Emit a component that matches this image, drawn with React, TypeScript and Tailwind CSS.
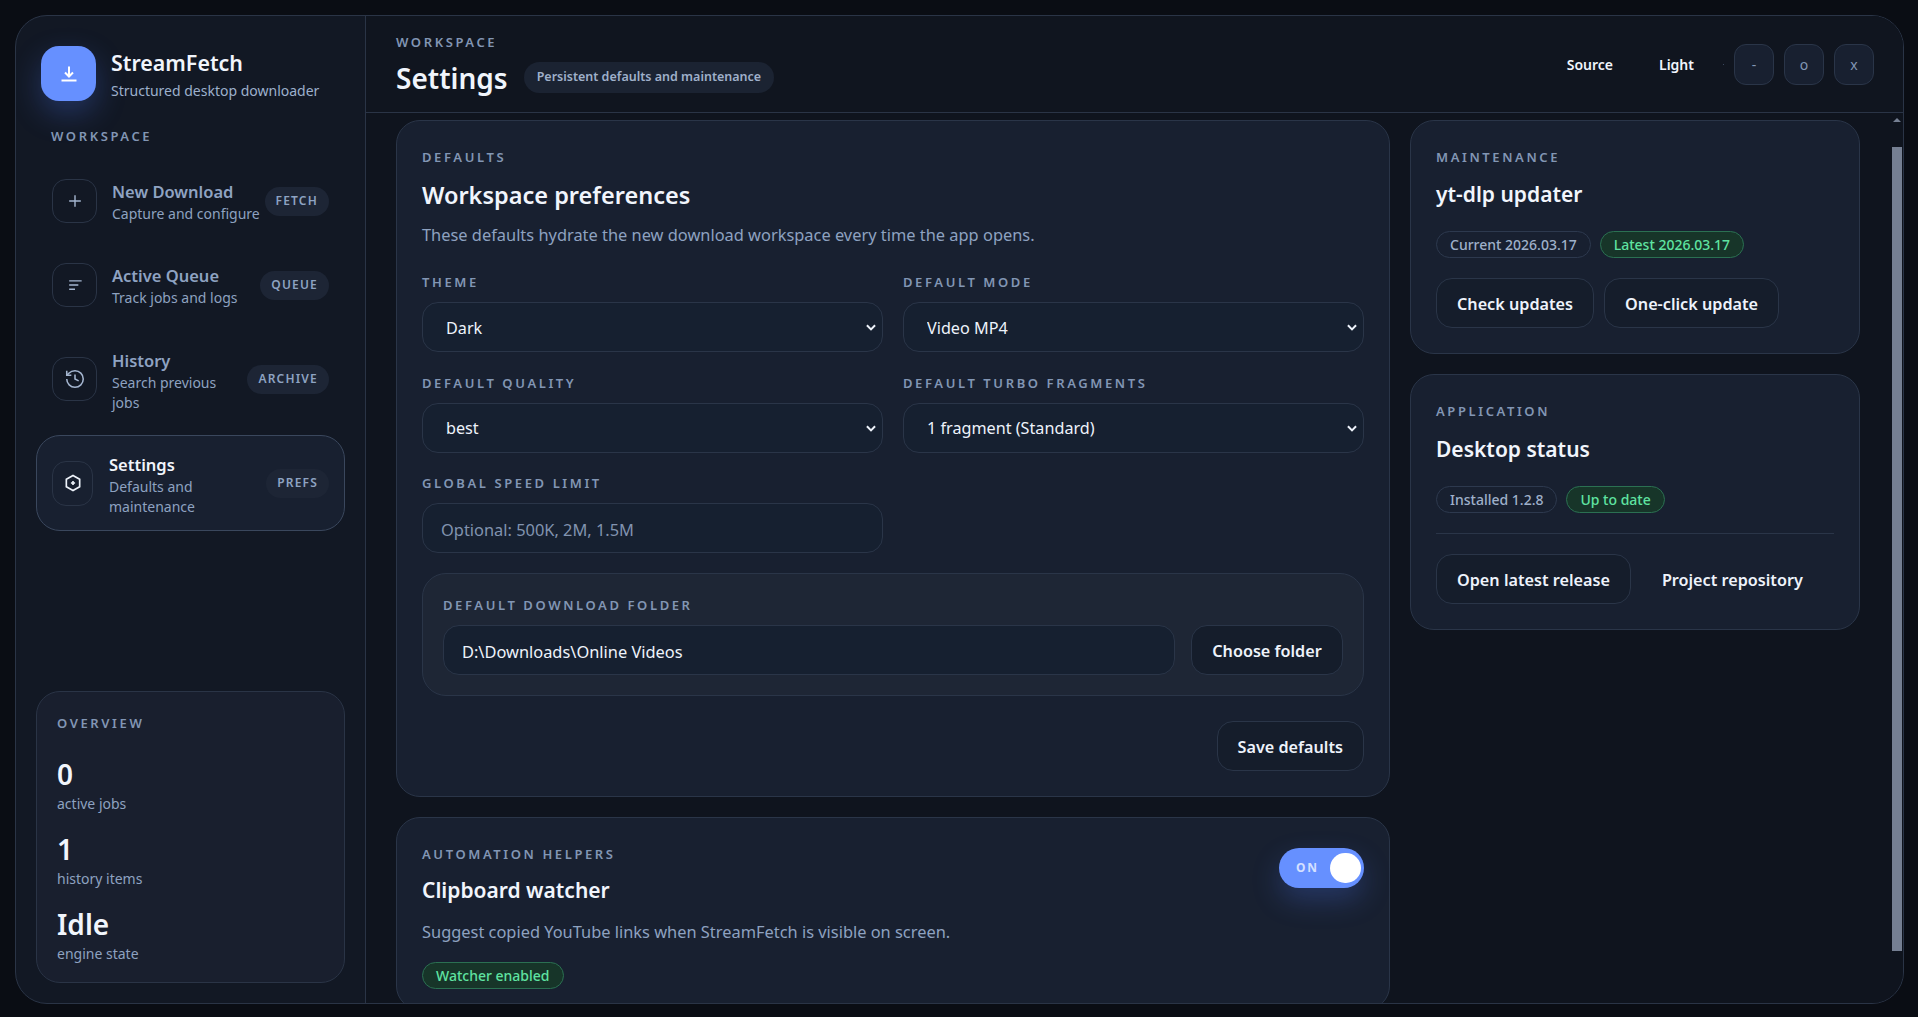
import type { ReactNode } from "react";

const eyebrow = "text-[13px] leading-[18px] font-semibold uppercase tracking-[0.2em] text-[#8296b4]";
const selectCls =
  "h-[50px] w-full appearance-none rounded-[16px] border border-[#2a3548] bg-[#162030] pt-[2px] pr-6 pl-[23px] text-[16.2px] text-[#eef3fb] outline-none";
const inputCls =
  "h-[50px] w-full rounded-[16px] border border-[#2a3548] bg-[#162030] px-[18px] pt-[2px] text-[16.4px] text-[#eef3fb] outline-none placeholder:text-[#8193af]";
const btn =
  "inline-flex h-[50px] shrink-0 items-center justify-center rounded-[16px] border border-[#2a3548] bg-[#151d2b] px-5 pt-[2px] text-[16.2px] font-semibold whitespace-nowrap text-[#eef3fb]";
const cardCls = "rounded-[24px] border border-[#2a3548] bg-[#182030] px-[25px] pt-[27px]";
const cardTitle = "text-[21px] leading-[30px] font-semibold text-[#f1f5fc]";

const navItems = [
  {
    title: "New Download",
    desc: ["Capture and configure"],
    badge: "FETCH",
    size: 20,
    icon: <path d="M12 5v14M5 12h14" />,
  },
  {
    title: "Active Queue",
    desc: ["Track jobs and logs"],
    badge: "QUEUE",
    size: 20,
    icon: <path d="M5 7h15M5 12h11M5 17h7" />,
  },
  {
    title: "History",
    desc: ["Search previous", "jobs"],
    badge: "ARCHIVE",
    size: 22,
    icon: (
      <>
        <path d="M3 12a9 9 0 1 0 9-9 9.75 9.75 0 0 0-6.74 2.74L3 8" />
        <path d="M3 3v5h5" />
        <path d="M12 7v5l4 2" />
      </>
    ),
  },
];

function Field({ label, children }: { label: string; children: ReactNode }) {
  return (
    <label className="flex flex-col gap-[11px] pt-px">
      <span className={eyebrow}>{label}</span>
      {children}
    </label>
  );
}

function Select({ value }: { value: string }) {
  return (
    <div className="relative">
      <select className={selectCls} defaultValue={value}>
        <option>{value}</option>
      </select>
      <svg
        className="pointer-events-none absolute top-[18px] right-[5px]"
        width="14"
        height="14"
        viewBox="0 0 24 24"
        fill="none"
        stroke="#eef3fb"
        strokeWidth="3.4"
      >
        <path d="M5 9l7 7 7-7" />
      </svg>
    </div>
  );
}

function Pill({ green, children }: { green?: boolean; children: ReactNode }) {
  return (
    <span
      className={
        "inline-flex h-[27px] items-center rounded-full border px-[13px] text-[14px] font-medium " +
        (green
          ? "border-[#2b7052] bg-[#173529] text-[#5fe3a1]"
          : "border-[#2d394e] bg-transparent text-[#9fb0ca]")
      }
    >
      {children}
    </span>
  );
}

function NavBadge({ children }: { children: string }) {
  return (
    <span className="inline-flex h-[29px] shrink-0 items-center rounded-full bg-[#1d2535] px-[11px] text-[12px] font-semibold tracking-[0.1em] text-[#8ea3c2]">
      {children}
    </span>
  );
}

export default function App() {
  return (
    <div
      className="h-screen w-full overflow-hidden bg-[#0a0d14] pt-[15px] pr-[14px] pb-[13px] pl-[15px] text-[#eef3fb]"
      style={{ fontFamily: '"Noto Sans", sans-serif' }}
    >
      <div className="flex h-full overflow-hidden rounded-[32px] border border-[#2a3446] bg-[#121824]">
        {/* sidebar */}
        <aside className="flex w-[350px] shrink-0 flex-col border-r border-[#2a3446] px-5 pt-[30px] pb-5">
          <div className="ml-[5px] flex items-center gap-[15px]">
            <div className="flex h-[55px] w-[55px] items-center justify-center rounded-[18px] bg-[#6690ff] shadow-[0_12px_30px_rgba(80,125,255,0.28)]">
              <svg width="24" height="24" viewBox="0 0 24 24" fill="none" stroke="#fff" strokeWidth="2">
                <path d="M12 4.5v10M8 10.5l4 4 4-4M4.5 18.5h15" />
              </svg>
            </div>
            <div className="mt-[3px]">
              <div className="text-[21.4px] leading-[28px] font-semibold text-[#f1f5fc]">StreamFetch</div>
              <div className="mt-1 text-[14px] leading-[20px] text-[#9db0cc]">Structured desktop downloader</div>
            </div>
          </div>

          <div className={"mt-[26px] ml-[15px] " + eyebrow}>WORKSPACE</div>

          <nav className="mt-[18px] flex flex-col gap-2">
            {navItems.map((item) => (
              <div key={item.title} className="flex items-center border border-transparent px-[15px] py-[15px]">
                <div className="flex h-[44px] w-[45px] shrink-0 items-center justify-center rounded-[14px] border border-[#2a3446] text-[#a4b5cf]">
                  <svg width={item.size} height={item.size} viewBox="0 0 24 24" fill="none" stroke="currentColor" strokeWidth="1.7">
                    {item.icon}
                  </svg>
                </div>
                <div className={"ml-[15px] min-w-0 flex-1 whitespace-nowrap " + (item.desc.length > 1 ? "mt-[2px] -mb-[2px]" : "mt-px -mb-px")}>
                  <div className="text-[16.5px] leading-[24px] font-semibold text-[#8fa3c2]">{item.title}</div>
                  {item.desc.map((d) => (
                    <div key={d} className="text-[14px] leading-[20px] text-[#8ea2c0]">
                      {d}
                    </div>
                  ))}
                </div>
                <NavBadge>{item.badge}</NavBadge>
              </div>
            ))}
            <div className="flex items-center rounded-[24px] border border-[#3a475d] bg-[#182030] px-[15px] py-[15px]">
              <div className="flex h-[45px] w-[41px] shrink-0 items-center justify-center rounded-[14px] border border-[#2a3446] text-[#eef3fb]">
                <svg width="20" height="20" viewBox="0 0 24 24" fill="none" stroke="currentColor" strokeWidth="2">
                  <path d="M12 3l8 4.5v9L12 21l-8-4.5v-9z" />
                  <path d="M12 9.5v5M9.5 12h5" />
                </svg>
              </div>
              <div className="mt-[2px] -mb-[2px] ml-4 min-w-0 flex-1 whitespace-nowrap">
                <div className="text-[16.5px] leading-[24px] font-semibold text-[#f1f5fc]">Settings</div>
                <div className="text-[14px] leading-[20px] text-[#8ea2c0]">Defaults and</div>
                <div className="text-[14px] leading-[20px] text-[#8ea2c0]">maintenance</div>
              </div>
              <NavBadge>PREFS</NavBadge>
            </div>
          </nav>

          <div className="mt-auto flex h-[292px] flex-col rounded-[24px] border border-[#2a3446] bg-[#191f2e] px-5 pt-[22px]">
            <div className={eyebrow}>OVERVIEW</div>
            {[
              ["0", "active jobs"],
              ["1", "history items"],
              ["Idle", "engine state"],
            ].map(([value, label], i) => (
              <div key={label} className={i === 0 ? "mt-[23px]" : "mt-4"}>
                <div className="text-[28px] leading-[39px] font-semibold text-[#f1f5fc]">{value}</div>
                <div className="text-[14px] leading-[20px] text-[#8ea2c0]">{label}</div>
              </div>
            ))}
          </div>
        </aside>

        {/* main */}
        <main className="flex min-w-0 flex-1 flex-col bg-[#0f141e]">
          <header className="flex h-[97px] shrink-0 items-center justify-between border-b border-[#2a3446] bg-[#10151f] pr-[29px] pl-[30px]">
            <div className="pt-[2px]">
              <div className={eyebrow}>WORKSPACE</div>
              <div className="mt-[7px] flex items-center gap-4">
                <h1 className="text-[28px] leading-[40px] font-semibold text-[#f1f5fc]">Settings</h1>
                <span className="inline-flex h-[31px] items-center rounded-full bg-[#1b2332] px-[13px] text-[12.5px] font-semibold text-[#9fb0ca]">
                  Persistent defaults and maintenance
                </span>
              </div>
            </div>
            <div className="flex items-center">
              <span className="text-[14px] font-semibold text-[#f1f5fc]">Source</span>
              <span className="ml-[46px] text-[14px] font-semibold text-[#f1f5fc]">Light</span>
              <span className="ml-[29px] h-px w-px bg-[#3a475d]" />
              <div className="ml-[10px] flex gap-[10px]">
                {["-", "o", "x"].map((c) => (
                  <span
                    key={c}
                    className="flex h-[41px] w-10 items-center justify-center rounded-[12px] border border-[#2a3548] bg-[#182030] text-[14px] text-[#8296b4]"
                  >
                    {c}
                  </span>
                ))}
              </div>
            </div>
          </header>

          <div className="flex min-h-0 flex-1 overflow-hidden">
            <div className="grid min-w-0 flex-1 grid-cols-[994px_450px] content-start items-start gap-x-5 pt-[7px] pl-[30px]">
              <div className="flex flex-col gap-5">
                <section className={cardCls + " pb-[25px]"}>
                  <div className={eyebrow}>DEFAULTS</div>
                  <h2 className="mt-[13px] text-[23.5px] leading-[32px] font-semibold text-[#f1f5fc]">Workspace preferences</h2>
                  <p className="mt-3 text-[16.4px] leading-[24px] text-[#8ea2c0]">
                    These defaults hydrate the new download workspace every time the app opens.
                  </p>
                  <div className="mt-[25px] grid grid-cols-2 gap-x-5 gap-y-[20.5px]">
                    <Field label="Theme">
                      <Select value="Dark" />
                    </Field>
                    <Field label="Default mode">
                      <Select value="Video MP4" />
                    </Field>
                    <Field label="Default quality">
                      <Select value="best" />
                    </Field>
                    <Field label="Default turbo fragments">
                      <Select value="1 fragment (Standard)" />
                    </Field>
                    <Field label="Global speed limit">
                      <input className={inputCls} placeholder="Optional: 500K, 2M, 1.5M" />
                    </Field>
                  </div>
                  <div className="mt-5 rounded-[24px] border border-[#2a3548] bg-[#1e2635] px-5 pt-[22px] pb-5">
                    <div className={eyebrow}>DEFAULT DOWNLOAD FOLDER</div>
                    <div className="mt-[11px] flex gap-4">
                      <input className={inputCls + " flex-1"} defaultValue="D:\Downloads\Online Videos" />
                      <button className={btn + " w-[152px]"}>Choose folder</button>
                    </div>
                  </div>
                  <div className="mt-[25px] flex justify-end">
                    <button className={btn}>Save defaults</button>
                  </div>
                </section>

                <section className={cardCls + " pb-5"}>
                  <div className="flex items-start justify-between">
                    <div>
                      <div className={eyebrow}>AUTOMATION HELPERS</div>
                      <h2 className={"mt-3 " + cardTitle}>Clipboard watcher</h2>
                    </div>
                    <div className="mt-[3px] flex h-10 w-[85px] items-center justify-between rounded-full bg-[#6690ff] pr-[3px] pl-[17px] shadow-[0_12px_28px_rgba(80,125,255,0.25)]">
                      <span className="text-[12px] font-bold tracking-[0.14em] text-[#d5e0ff]">ON</span>
                      <span className="h-[30px] w-[31px] rounded-full bg-white" />
                    </div>
                  </div>
                  <p className="mt-[15px] text-[16.4px] leading-[24px] text-[#8ea2c0]">
                    Suggest copied YouTube links when StreamFetch is visible on screen.
                  </p>
                  <div className="mt-[18px]">
                    <Pill green>Watcher enabled</Pill>
                  </div>
                </section>
              </div>

              <div className="flex flex-col gap-5">
                <section className={cardCls + " pb-[25px]"}>
                  <div className={eyebrow}>MAINTENANCE</div>
                  <h2 className={"mt-[13px] " + cardTitle}>yt-dlp updater</h2>
                  <div className="mt-[22px] flex gap-[9px]">
                    <Pill>Current 2026.03.17</Pill>
                    <Pill green>Latest 2026.03.17</Pill>
                  </div>
                  <div className="mt-5 flex gap-[10px]">
                    <button className={btn}>Check updates</button>
                    <button className={btn}>One-click update</button>
                  </div>
                </section>

                <section className={cardCls + " pb-[25px]"}>
                  <div className={eyebrow}>APPLICATION</div>
                  <h2 className={"mt-[14px] " + cardTitle}>Desktop status</h2>
                  <div className="mt-[22px] flex gap-[9px]">
                    <Pill>Installed 1.2.8</Pill>
                    <Pill green>Up to date</Pill>
                  </div>
                  <div className="mt-5 h-px bg-[#2a3548]" />
                  <div className="mt-5 flex gap-[10px]">
                    <button className={btn}>Open latest release</button>
                    <button className={btn + " border-transparent bg-transparent"}>Project repository</button>
                  </div>
                </section>
              </div>
            </div>

            {/* scrollbar */}
            <div className="mr-px flex h-[838px] w-[10px] shrink-0 flex-col items-center pt-[5px]">
              <span className="h-0 w-0 border-x-[4px] border-b-[4px] border-x-transparent border-b-[#757f92]" />
              <span className="mt-[25px] w-[10px] flex-1 bg-[#757f92]" />
            </div>
          </div>
        </main>
      </div>
    </div>
  );
}
